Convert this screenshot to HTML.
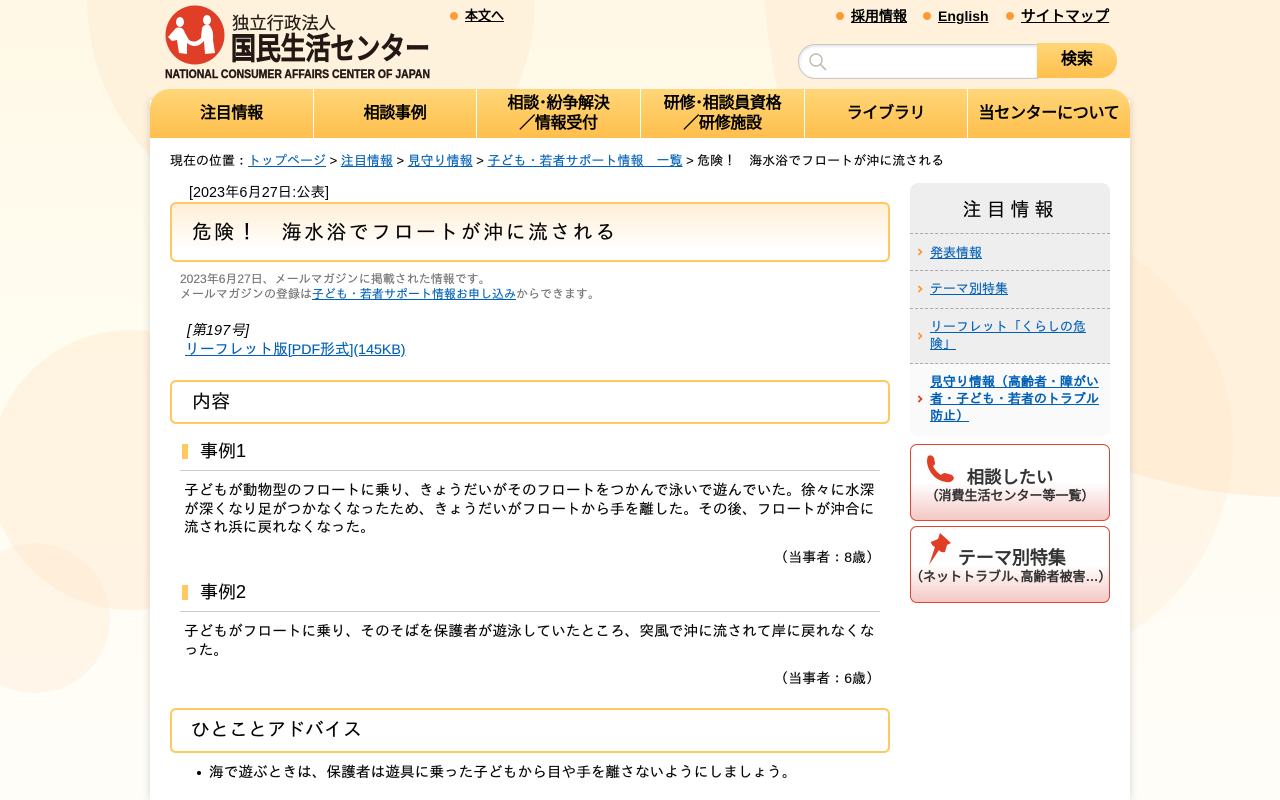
<!DOCTYPE html>
<html lang="ja"><head><meta charset="utf-8"><title>危険！ 海水浴でフロートが沖に流される</title>
<style>
*{box-sizing:border-box}
html,body{margin:0;padding:0;width:1280px;height:800px;overflow:hidden}
body{position:relative;font-family:"Liberation Sans","IPAGothic",sans-serif;color:#000;background:linear-gradient(#fff8e6,#fffcf0 40%,#fffdf8)}
.a{position:absolute;white-space:nowrap}
a{color:#0060b8}
.w{font-family:"Liberation Sans","WenQuanYi Zen Hei",sans-serif}
.l{font-size:14.2px}
.t{-webkit-text-stroke:.12px currentColor}
.bgc{position:absolute;border-radius:50%}
.dot{position:absolute;width:8px;height:8px;border-radius:50%;background:#ff9933}
.top{font-size:14px;font-weight:bold;line-height:16px;font-family:"Liberation Sans","WenQuanYi Zen Hei",sans-serif}.top a{color:#000}
.nav{position:absolute;left:150px;top:89px;width:980px;height:49px;border-radius:20px 20px 0 0;background:linear-gradient(#ffd678,#ffbf4d);overflow:hidden;font-family:"Liberation Sans","WenQuanYi Zen Hei",sans-serif}
.nav b{position:absolute;top:0;height:49px;display:flex;align-items:center;justify-content:center;text-align:center;font-size:16px;line-height:20px;border-right:1px solid #fff;white-space:nowrap;letter-spacing:-.3px}
.box{position:absolute;left:170px;width:720px;border:2px solid #ffc860;border-radius:6px;font-size:19px;padding-left:20px}
.h3{position:absolute;left:180px;width:700px;border-bottom:1px solid #ccc;font-size:18px;height:34px;line-height:28px;padding-left:20px}
.h3:before{content:"";position:absolute;left:2px;top:7px;width:6px;height:15px;background:#ffc860}
.p{font-size:14.7px;line-height:18.5px;-webkit-text-stroke:.12px currentColor}
.s{position:absolute;left:910px;width:200px;border-top:1px dashed #aaa;font-size:13px;line-height:17px}
.s i{position:absolute;left:6px;width:6px;height:6px;border-top:2px solid #f93;border-right:2px solid #f93;transform:rotate(45deg) scale(.85)}
.btn{position:absolute;left:910px;width:200px;border:1px solid #e04530;border-radius:7px;background:linear-gradient(#fff 0,#fff 50%,#f4c8c4 100%)}
</style></head><body>
<div class="bgc" style="left:87px;top:-224px;width:448px;height:448px;background:#fff2dc"></div>
<div class="bgc" style="left:764px;top:-555px;width:1052px;height:1052px;background:#fff1dc"></div>
<div class="bgc" style="left:-10px;top:330px;width:280px;height:280px;background:rgba(255,225,190,.3)"></div>
<div class="bgc" style="left:-40px;top:543px;width:150px;height:150px;background:rgba(255,215,180,.18)"></div>
<div class="bgc" style="left:783px;top:219px;width:450px;height:450px;background:rgba(255,225,190,.2)"></div>

<div style="position:absolute;left:150px;top:100px;width:980px;height:700px;background:#fff;box-shadow:0 0 8px rgba(0,0,0,.16)"></div>

<svg class="a w" style="left:160px;top:0" width="280" height="85" viewBox="160 0 280 85">
<circle cx="195" cy="35" r="29.5" fill="#e03e26"/>
<g fill="#fff">
<ellipse cx="180" cy="22" rx="4" ry="5"/><ellipse cx="207" cy="20" rx="4" ry="5"/>
<path d="M176 28 Q183 26 185 33 L189 40 Q195 44 201 38 L202 28 Q204 24 209 25 Q214 30 213 40 L215 53 L205 54 L204 41 Q196 50 187 43 L187 54 L179 53 L177 40 L172 41 L168 37Z"/>
</g>
<text x="232" y="29" font-size="17" fill="#231815" stroke="#231815" stroke-width=".2" textLength="104" lengthAdjust="spacingAndGlyphs">独立行政法人</text>
<text x="231" y="59" font-size="30" font-weight="bold" fill="#231815" stroke="#231815" stroke-width=".7" textLength="199" lengthAdjust="spacingAndGlyphs">国民生活センター</text>
<text x="165" y="78" font-size="12" font-weight="bold" fill="#231815" stroke="#231815" stroke-width=".4" textLength="265" lengthAdjust="spacingAndGlyphs">NATIONAL CONSUMER AFFAIRS CENTER OF JAPAN</text>
</svg>

<span class="dot" style="left:450px;top:12px"></span><div class="a top" style="left:465px;top:8px;font-size:13px"><a href="#">本文へ</a></div>
<span class="dot" style="left:836px;top:12px"></span><div class="a top" style="left:851px;top:8px"><a href="#">採用情報</a></div>
<span class="dot" style="left:923px;top:12px"></span><div class="a top" style="left:938px;top:8px"><a href="#">English</a></div>
<span class="dot" style="left:1006px;top:12px"></span><div class="a top" style="left:1021px;top:9px;font-size:14.7px"><a href="#">サイトマップ</a></div>

<div style="position:absolute;left:798px;top:44px;width:240px;height:35px;background:#fff;border:1px solid #c8c8c8;border-right:0;border-radius:17px 0 0 17px;box-shadow:inset 0 1px 3px rgba(0,0,0,.15)"></div>
<svg class="a" style="left:806px;top:50px" width="24" height="22"><circle cx="10" cy="10" r="6" fill="none" stroke="#bdbdb0" stroke-width="1.4"/><path d="M14.5 14.5 L20 20" stroke="#bdbdb0" stroke-width="1.6"/></svg>
<div class="a w" style="left:1037px;top:43px;width:80px;height:35px;border-radius:0 17px 17px 0;background:linear-gradient(#ffd678,#ffbf4d);font-size:16px;font-weight:bold;line-height:34px;text-align:center">検索</div>

<div class="nav">
<b style="left:0;width:164px">注目情報</b>
<b style="left:164px;width:163px">相談事例</b>
<b style="left:327px;width:164px">相談･紛争解決<br>／情報受付</b>
<b style="left:491px;width:164px">研修･相談員資格<br>／研修施設</b>
<b style="left:655px;width:163px">ライブラリ</b>
<b style="left:818px;width:162px;border:0">当センターについて</b>
</div>

<div class="a t" style="left:170px;top:152px;font-size:13px;line-height:18px">現在の位置：<a href="#">トップページ</a> &gt; <a href="#">注目情報</a> &gt; <a href="#">見守り情報</a> &gt; <a href="#">子ども・若者サポート情報　一覧</a> &gt; 危険！　海水浴でフロートが沖に流される</div>

<div class="a" style="left:189px;top:184px;font-size:14.4px;line-height:18px">[2023年6月27日:公表]</div>
<div class="box t" style="top:202px;height:60px;line-height:58px;font-size:20px;letter-spacing:2.4px;background:linear-gradient(#ffefd6,#fff 85%)">危険！　海水浴でフロートが沖に流される</div>

<div class="a t" style="left:180px;top:272px;font-size:12px;line-height:15px;color:#707070">2023年6月27日、メールマガジンに掲載された情報です。<br>メールマガジンの登録は<a href="#">子ども・若者サポート情報お申し込み</a>からできます。</div>
<div class="a" style="left:187px;top:322px;font-size:14.7px;line-height:18px;font-style:italic">[第197号]</div>
<div class="a t" style="left:185px;top:341px;font-size:14.7px;line-height:18px"><a href="#">リーフレット版<span class="l">[PDF</span>形式<span class="l">](145KB)</span></a></div>

<div class="box t" style="top:380px;height:44px;line-height:41px">内容</div>
<div class="h3 t" style="top:437px">事例1</div>
<div class="a p" style="left:184px;top:482px">子どもが動物型のフロートに乗り、きょうだいがそのフロートをつかんで泳いで遊んでいた。徐々に水深<br>が深くなり足がつかなくなったため、きょうだいがフロートから手を離した。その後、フロートが沖合に<br>流され浜に戻れなくなった。</div>
<div class="a t" style="right:400px;top:548px;font-size:14px;line-height:18px">（当事者：8歳）</div>
<div class="h3 t" style="top:578px">事例2</div>
<div class="a p" style="left:184px;top:623px">子どもがフロートに乗り、そのそばを保護者が遊泳していたところ、突風で沖に流されて岸に戻れなくな<br>った。</div>
<div class="a t" style="right:400px;top:669px;font-size:14px;line-height:18px">（当事者：6歳）</div>
<div class="box t" style="top:708px;height:45px;line-height:42px;padding-left:19px">ひとことアドバイス</div>
<div class="a p" style="left:209px;top:764px">海で遊ぶときは、保護者は遊具に乗った子どもから目や手を離さないようにしましょう。</div>
<div class="a" style="left:197px;top:771px;width:4px;height:4px;border-radius:50%;background:#000"></div>

<div style="position:absolute;left:910px;top:183px;width:200px;height:253px;border-radius:8px;background:#eee;overflow:hidden">
<div style="position:absolute;left:0;top:181px;width:200px;height:72px;background:#fafafa"></div></div>
<div class="a t" style="left:910px;top:199px;width:200px;text-align:center;font-size:19px;line-height:24px;letter-spacing:5px;padding-left:1px">注目情報</div>
<div class="s t" style="top:233px;height:38px"><i style="top:15px"></i><a class="a" style="left:20px;top:10px" href="#">発表情報</a></div>
<div class="s t" style="top:270px;height:38px"><i style="top:15px"></i><a class="a" style="left:20px;top:9px" href="#">テーマ別特集</a></div>
<div class="s t" style="top:308px;height:56px"><i style="top:24px"></i><a class="a" style="left:20px;top:9px" href="#">リーフレット「くらしの危<br>険」</a></div>
<div class="s" style="top:363px;height:72px"><i style="top:32px;border-color:#e03e26"></i><a class="a" style="left:20px;top:9px;font-weight:bold" href="#">見守り情報（高齢者・障がい<br>者・子ども・若者のトラブル<br>防止）</a></div>

<div class="btn" style="top:444px;height:77px"></div>
<div class="btn" style="top:526px;height:77px"></div>
<svg class="a" style="left:920px;top:450px" width="40" height="36" viewBox="920 450 40 36"><path d="M928 456 Q932 454 934 458 L935 463 Q935 465 933 466 Q936 472 941 475 Q943 473 945 473 L952 475 Q955 478 953 480 Q950 483 946 482 Q933 480 928 467 Q926 460 928 456Z" fill="#e03e26"/></svg>
<div class="a w" style="left:910px;top:466px;width:200px;padding-left:57px;font-size:17.3px;font-weight:bold;line-height:22px;color:#333">相談したい</div>
<div class="a w" style="left:910px;top:488px;width:200px;text-align:center;font-size:13px;font-weight:bold;line-height:16px;color:#333">（消費生活センター等一覧）</div>
<svg class="a" style="left:925px;top:530px" width="30" height="38" viewBox="925 530 30 38"><path d="M940 533 L951 543 L947 545 L945 552 Q941 553 939 550 L929 565 L935 547 Q931 545 931 542 L938 539Z" fill="#e03e26"/></svg>
<div class="a w" style="left:910px;top:547px;width:200px;padding-left:48px;font-size:18px;font-weight:bold;line-height:22px;color:#333">テーマ別特集</div>
<div class="a w" style="left:910px;top:569px;width:200px;text-align:center;font-size:13px;font-weight:bold;line-height:16px;color:#333">（ネットトラブル､高齢者被害…）</div>
</body></html>
